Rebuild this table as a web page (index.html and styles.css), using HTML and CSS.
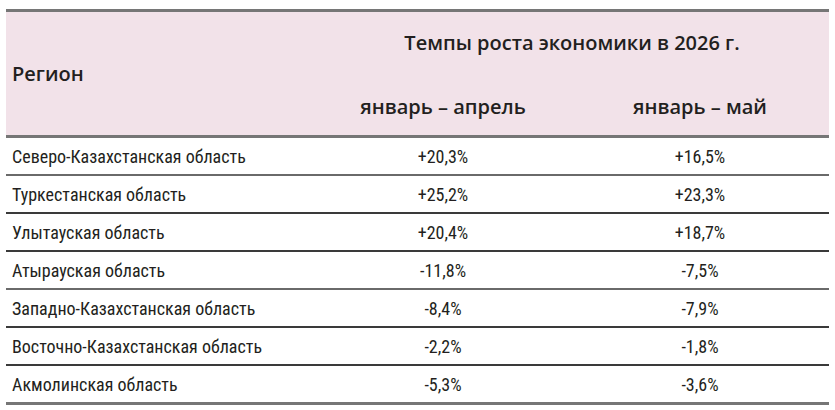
FILE: index.html
```html
<!DOCTYPE html>
<html lang="ru">
<head>
<meta charset="utf-8">
<link rel="stylesheet" href="styles.css">
</head>
<body>
<table class="growth">
  <colgroup>
    <col class="c-region">
    <col class="c-apr">
    <col class="c-may">
  </colgroup>
  <thead>
    <tr class="h1">
      <th class="region-h" rowspan="2">Регион</th>
      <th class="group-h" colspan="2">Темпы роста экономики в 2026 г.</th>
    </tr>
    <tr class="h2">
      <th class="period">январь – апрель</th>
      <th class="period">январь – май</th>
    </tr>
  </thead>
  <tbody>
    <tr class="thick"><td class="name">Северо-Казахстанская область</td><td class="val">+20,3%</td><td class="val">+16,5%</td></tr>
    <tr><td class="name">Туркестанская область</td><td class="val">+25,2%</td><td class="val">+23,3%</td></tr>
    <tr><td class="name">Улытауская область</td><td class="val">+20,4%</td><td class="val">+18,7%</td></tr>
    <tr class="thick"><td class="name">Атырауская область</td><td class="val">-11,8%</td><td class="val">-7,5%</td></tr>
    <tr><td class="name">Западно-Казахстанская область</td><td class="val">-8,4%</td><td class="val">-7,9%</td></tr>
    <tr><td class="name">Восточно-Казахстанская область</td><td class="val">-2,2%</td><td class="val">-1,8%</td></tr>
    <tr class="last"><td class="name">Акмолинская область</td><td class="val">-5,3%</td><td class="val">-3,6%</td></tr>
  </tbody>
</table>
</body>
</html>
```

FILE: styles.css
```css
html, body {
  margin: 0;
  padding: 0;
  background: #ffffff;
}

body {
  padding: 9px 0 0 6px;
}

.growth {
  border-collapse: collapse;
  width: 823px;
  table-layout: fixed;
  color: #231f20;
}

.c-region { width: 309px; }
.c-apr { width: 256px; }
.c-may { width: 258px; }

.growth thead {
  background: #f2e2e9;
}

.growth th {
  font-family: "Open Sans", "Liberation Sans", sans-serif;
  font-weight: 600;
  font-size: 20px;
  line-height: 27px;
  padding: 0;
  color: #231f20;
}

.h1 th {
  border-top: 3px solid #767676;
}

.region-h {
  text-align: left;
  vertical-align: middle;
  padding-left: 6px !important;
  border-bottom: 3px solid #767676;
}

.group-h {
  text-align: center;
  vertical-align: top;
  height: 43px;
  padding-top: 17px !important;
}

.period {
  text-align: center;
  vertical-align: top;
  height: 42px;
  padding-top: 21px !important;
  border-bottom: 3px solid #767676;
}

.growth td {
  font-family: "Roboto Condensed", "Roboto", sans-serif;
  font-stretch: condensed;
  font-size: 18px;
  height: 36px;
  padding: 0;
  border-bottom: 2px solid #3a3a3a;
  vertical-align: middle;
}

.growth tr.thick td {
  border-bottom-color: #6a6a6a;
}

.growth tr.last td {
  border-bottom: 3px solid #767676;
}

.name {
  padding-left: 6px !important;
  text-align: left;
}

.val {
  text-align: center;
}
```
